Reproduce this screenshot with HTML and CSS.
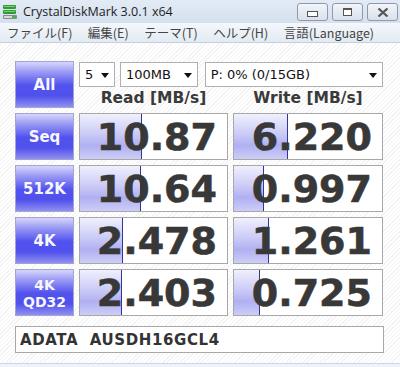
FILE: index.html
```html
<!DOCTYPE html>
<html lang="ja">
<head>
    <meta charset="UTF-8">
    <title>CrystalDiskMark 3.0.1 x64</title>
    <link rel="stylesheet" href="styles.css">
</head>
<body>

    <div id="window">
        <div class="titlebar">
            <svg class="app-icon" width="16" height="16" viewBox="0 0 16 16">
                <rect x="1" y="1" width="13" height="4" rx="1" fill="#2f9a2f"/>
                <rect x="2" y="2" width="11" height="1" fill="#7fd07f"/>
                <rect x="1" y="6" width="13" height="4" rx="1" fill="#2f9a2f"/>
                <rect x="2" y="7" width="11" height="1" fill="#7fd07f"/>
                <rect x="1" y="11" width="14" height="4" rx="1" fill="#8a8a8a"/>
                <rect x="2" y="12" width="8" height="2" fill="#d8d8d8"/>
                <rect x="11" y="12" width="3" height="2" fill="#3cb83c"/>
            </svg>
            <span class="title">CrystalDiskMark 3.0.1 x64</span>
            <div class="win-buttons">
                <div class="win-btn"><span class="ico-min"></span></div>
                <div class="win-btn"><span class="ico-max"></span></div>
                <div class="win-btn close">
                    <svg width="12" height="9" viewBox="0 0 12 9">
                        <path d="M1.5 0.5 L10.5 8.5 M10.5 0.5 L1.5 8.5" stroke="#555" stroke-width="2.2" fill="none"/>
                    </svg>
                </div>
            </div>
        </div>

        <div class="menubar">
            <span>ファイル(F)</span>
            <span>編集(E)</span>
            <span>テーマ(T)</span>
            <span>ヘルプ(H)</span>
            <span>言語(Language)</span>
        </div>

        <div class="main">
            <div class="grid">
                <div class="test-btn">All</div>
                <div class="top-controls">
                    <div class="selects">
                        <div class="select s-count">5<span class="arrow"></span></div>
                        <div class="select s-size">100MB<span class="arrow"></span></div>
                        <div class="select s-drive">P: 0% (0/15GB)<span class="arrow"></span></div>
                    </div>
                    <div class="headers">
                        <div class="col-head">Read [MB/s]</div>
                        <div class="col-head">Write [MB/s]</div>
                    </div>
                </div>

                <div class="test-btn">Seq</div>
                <div class="result"><div class="bar" style="width: 61px"></div><span>10.87</span></div>
                <div class="result"><div class="bar" style="width: 53px"></div><span>6.220</span></div>

                <div class="test-btn">512K</div>
                <div class="result"><div class="bar" style="width: 60px"></div><span>10.64</span></div>
                <div class="result"><div class="bar" style="width: 29px"></div><span>0.997</span></div>

                <div class="test-btn">4K</div>
                <div class="result"><div class="bar" style="width: 42px"></div><span>2.478</span></div>
                <div class="result"><div class="bar" style="width: 34px"></div><span>1.261</span></div>

                <div class="test-btn two-line">4K<br>QD32</div>
                <div class="result"><div class="bar" style="width: 41px"></div><span>2.403</span></div>
                <div class="result"><div class="bar" style="width: 25px"></div><span>0.725</span></div>
            </div>

            <div class="drive-name">ADATA  AUSDH16GCL4</div>
        </div>

        <div class="bottom-edge"></div>
    </div>

</body>
</html>
```

FILE: styles.css
```css
body {
    margin: 0;
    padding: 0;
    font-family: "DejaVu Sans", Verdana, sans-serif;
    background: #ffffff;
}
#window {
    width: 400px;
    height: 367px;
    overflow: hidden;
    display: flex;
    flex-direction: column;
    background: repeating-linear-gradient(135deg, #ffffff 0px, #ffffff 2px, #f3f3f3 2px, #f3f3f3 3px);
}
.titlebar {
    height: 23px;
    display: flex;
    align-items: center;
    background: linear-gradient(to bottom, #e3ebf5, #d4e0ee);
    padding-left: 2px;
}
.app-icon {
    margin-right: 5px;
}
.title {
    font-family: "Open Sans", "Noto Sans", sans-serif;
    font-size: 12.5px;
    color: #1e1e1e;
}
.win-buttons {
    margin-left: auto;
    display: flex;
    gap: 4px;
    padding-right: 2px;
    align-self: flex-start;
    padding-top: 3px;
}
.win-btn {
    width: 29px;
    height: 16px;
    border: 1px solid #8e9aab;
    border-radius: 3px;
    background: linear-gradient(to bottom, #f2f5f9, #d9e1ec);
    display: flex;
    align-items: center;
    justify-content: center;
}
.ico-min {
    width: 9px;
    height: 4px;
    border: 1px solid #555;
    margin-top: 4px;
    background: #fff;
}
.ico-max {
    width: 7px;
    height: 5px;
    border: 1px solid #555;
    border-top-width: 2px;
    background: #fff;
}
.menubar {
    height: 19px;
    display: flex;
    gap: 15.5px;
    align-items: center;
    padding-left: 7px;
    background: linear-gradient(to bottom, #f5f8fc, #e2eaf3);
    border-bottom: 1px solid #c4d0de;
    font-family: "Noto Sans CJK JP", sans-serif;
    font-size: 12.5px;
    color: #444;
}
.main {
    flex: 1;
    padding: 18px 0 0 15px;
}
.grid {
    display: grid;
    grid-template-columns: 59px 149px 150px;
    grid-template-rows: repeat(5, 47px);
    column-gap: 5px;
    row-gap: 5px;
}
.test-btn {
    box-sizing: border-box;
    border: 1px solid #a5a5d5;
    background: linear-gradient(to bottom, #d6d6fa 0%, #9a9af5 22%, #5252ee 52%, #5050ec 75%, #9090f2 100%);
    color: #f6f6ff;
    font-weight: bold;
    font-size: 15px;
    display: flex;
    align-items: center;
    justify-content: center;
    text-align: center;
}
.test-btn.two-line {
    line-height: 17px;
    font-size: 14px;
    padding-top: 2px;
}
.top-controls {
    grid-column: 2 / 4;
    display: flex;
    flex-direction: column;
}
.selects {
    display: flex;
    margin-top: 1px;
}
.select {
    box-sizing: border-box;
    height: 25px;
    border: 1px solid #b0b0b0;
    background: #fff;
    font-size: 13px;
    color: #111;
    display: flex;
    align-items: center;
    padding-left: 5px;
    position: relative;
}
.s-count {
    width: 36px;
}
.s-size {
    width: 78px;
    margin-left: 5px;
}
.s-drive {
    width: 179px;
    margin-left: 7px;
}
.arrow {
    position: absolute;
    right: 5px;
    top: 10px;
    width: 0;
    height: 0;
    border-left: 4px solid transparent;
    border-right: 4px solid transparent;
    border-top: 5px solid #111;
}
.headers {
    display: grid;
    grid-template-columns: 149px 150px;
    column-gap: 5px;
    flex: 1;
    align-items: center;
}
.col-head {
    text-align: center;
    font-weight: bold;
    font-size: 15.5px;
    color: #3a3a3a;
    padding-top: 1px;
}
.result {
    box-sizing: border-box;
    border: 1px solid #a8a8a8;
    background: #fff;
    position: relative;
    display: flex;
    align-items: center;
    justify-content: flex-end;
    padding-right: 10px;
    overflow: hidden;
}
.bar {
    position: absolute;
    left: 0;
    top: 0;
    bottom: 0;
    background: linear-gradient(to bottom, #f0f0fd 0%, #cacaf7 45%, #b0b0f2 70%, #cdcdf7 100%);
    border-right: 1px solid #34349a;
}
.result span {
    position: relative;
    font-weight: bold;
    font-size: 38px;
    color: #383838;
    -webkit-text-stroke: 0.6px #383838;
}
.drive-name {
    box-sizing: border-box;
    width: 369px;
    height: 27px;
    margin-top: 10px;
    border: 1px solid #a8a8a8;
    background: #fff;
    font-weight: bold;
    font-size: 15px;
    letter-spacing: 0.6px;
    color: #333;
    white-space: pre;
    padding-left: 4px;
    display: flex;
    align-items: center;
}
.bottom-edge {
    height: 3px;
    border-top: 1px solid #c9d7e8;
    background: #eef3f9;
}
```
